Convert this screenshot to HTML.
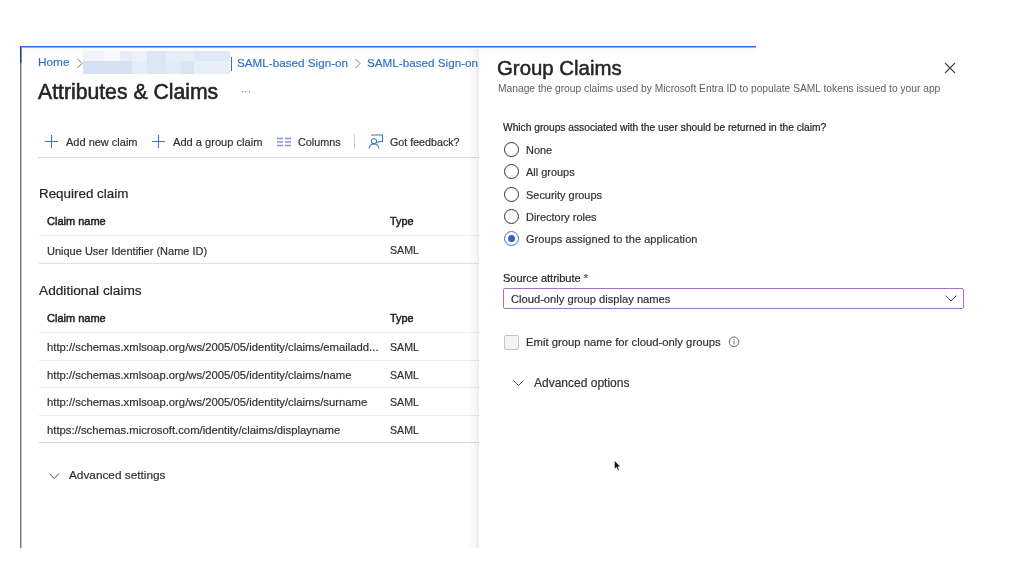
<!DOCTYPE html>
<html><head><meta charset="utf-8">
<style>
html,body{margin:0;padding:0;background:#fff;width:1023px;height:568px;overflow:hidden;position:relative;font-family:"Liberation Sans",sans-serif;}
.a{position:absolute;white-space:nowrap;line-height:1;will-change:transform;}
.ln{position:absolute;}
.link{color:#2f6fc8;-webkit-text-stroke:0.15px #2f6fc8;}
.dk{color:#242424;-webkit-text-stroke:0.2px #242424;}
.tx{color:#323130;-webkit-text-stroke:0.2px #323130;}
</style></head><body>

<!-- frame -->
<div class="ln" style="left:20px;top:46px;width:736px;height:1px;background:#2e6fd8;"></div><div class="ln" style="left:20px;top:47px;width:736px;height:1px;background:#8fb3ec;"></div>
<div class="ln" style="left:20px;top:46px;width:1px;height:17px;background:#1e3b70;"></div><div class="ln" style="left:21px;top:46px;width:1px;height:17px;background:#8090b0;"></div>
<div class="ln" style="left:20px;top:63px;width:1px;height:485px;background:#7a7a7a;"></div><div class="ln" style="left:21px;top:63px;width:1px;height:485px;background:#c4c4c4;"></div>

<div class="ln" style="left:22px;top:48px;width:734px;height:10px;background:linear-gradient(to bottom,rgba(0,0,0,0.018),rgba(0,0,0,0))"></div>
<!-- breadcrumb -->
<div class="a link" style="left:38px;top:57px;font-size:11.8px;">Home</div>
<svg class="ln" style="left:76px;top:58px" width="8" height="11" viewBox="0 0 8 11"><path d="M1.5 1 L6 5.5 L1.5 10" fill="none" stroke="#777" stroke-width="1"/></svg>
<!-- blurred block -->
<div class="ln" style="left:83px;top:51px;width:147px;height:23px;overflow:hidden">
  <div class="ln" style="left:0;top:0;width:20px;height:10px;background:#f1f5fb"></div>
  <div class="ln" style="left:20px;top:0;width:17px;height:10px;background:#f6f8fd"></div>
  <div class="ln" style="left:37px;top:0;width:12px;height:10px;background:#e6edf8"></div>
  <div class="ln" style="left:49px;top:0;width:15px;height:10px;background:#edf2fa"></div>
  <div class="ln" style="left:64px;top:0;width:19px;height:10px;background:#dde7f3"></div>
  <div class="ln" style="left:83px;top:0;width:28px;height:10px;background:#e8eef8"></div>
  <div class="ln" style="left:111px;top:0;width:36px;height:10px;background:#e0e8f4"></div>
  <div class="ln" style="left:0;top:10px;width:49px;height:13px;background:#d4e1f3"></div>
  <div class="ln" style="left:49px;top:10px;width:15px;height:13px;background:#e6edf9"></div>
  <div class="ln" style="left:64px;top:10px;width:19px;height:13px;background:#dde6f3"></div>
  <div class="ln" style="left:83px;top:10px;width:15px;height:13px;background:#e2eaf5"></div>
  <div class="ln" style="left:98px;top:10px;width:13px;height:13px;background:#dbe5f2"></div>
  <div class="ln" style="left:111px;top:10px;width:36px;height:13px;background:#e9eff8"></div>
</div>
<div class="ln" style="left:231px;top:57px;width:1px;height:14px;background:#2f6fc8"></div>
<div class="a link" style="left:237px;top:57px;font-size:11.7px;">SAML-based Sign-on</div>
<svg class="ln" style="left:354px;top:58px" width="8" height="11" viewBox="0 0 8 11"><path d="M1.5 1 L6 5.5 L1.5 10" fill="none" stroke="#777" stroke-width="1"/></svg>
<div class="a link" style="left:367px;top:57px;font-size:11.7px;">SAML-based Sign-on</div>

<!-- title -->
<div class="a dk" style="left:38px;top:81px;font-size:21.2px;-webkit-text-stroke:0.55px #242424">Attributes &amp; Claims</div>
<div class="a" style="left:241px;top:86.5px;font-size:10px;color:#666;letter-spacing:0px">&middot;&middot;&middot;</div>

<!-- toolbar -->
<svg class="ln" style="left:45px;top:135px" width="13" height="13" viewBox="0 0 13 13"><path d="M6.5 0 V13 M0 6.5 H13" stroke="#3b78d4" stroke-width="1.1" fill="none"/></svg>
<div class="a tx" style="left:66px;top:137px;font-size:11px;">Add new claim</div>
<svg class="ln" style="left:152px;top:135px" width="13" height="13" viewBox="0 0 13 13"><path d="M6.5 0 V13 M0 6.5 H13" stroke="#3b78d4" stroke-width="1.1" fill="none"/></svg>
<div class="a tx" style="left:172.5px;top:137px;font-size:11.1px;">Add a group claim</div>
<svg class="ln" style="left:276.5px;top:136.5px" width="15" height="11" viewBox="0 0 15 11"><path d="M0 1.5 H6 M0 5 H6 M0 8.5 H6 M8 1.5 H14 M8 5 H14 M8 8.5 H14" stroke="#7d96da" stroke-width="1.3" fill="none"/></svg>
<div class="a tx" style="left:298px;top:137px;font-size:10.8px;">Columns</div>
<div class="ln" style="left:354px;top:134px;width:1px;height:15px;background:#d0d0d0"></div>
<svg class="ln" style="left:368px;top:134px" width="16" height="15" viewBox="0 0 16 15"><path d="M4 2 V1 H14.5 V7.5 H11 L9.5 9" stroke="#3b78d4" stroke-width="1.1" fill="none"/><circle cx="6" cy="7.3" r="2.6" stroke="#3b78d4" stroke-width="1.1" fill="none"/><path d="M1 14.5 C1.5 11.5 3.5 10 6 10 C8.5 10 10.5 11.5 11 14.5" stroke="#3b78d4" stroke-width="1.1" fill="none"/></svg>
<div class="a tx" style="left:390px;top:137px;font-size:10.7px;">Got feedback?</div>
<div class="ln" style="left:38px;top:157px;width:441px;height:1px;background:#dcdcdc"></div>

<!-- required claim -->
<div class="a dk" style="left:38.5px;top:187px;font-size:13.4px;">Required claim</div>
<div class="a dk" style="left:47px;top:216px;font-size:11px;-webkit-text-stroke:0.5px #242424">Claim name</div>
<div class="a dk" style="left:390px;top:216px;font-size:10.8px;-webkit-text-stroke:0.5px #242424">Type</div>
<div class="ln" style="left:39px;top:235px;width:440px;height:1px;background:#f0f0f0"></div>
<div class="a tx" style="left:47px;top:246px;font-size:11px;">Unique User Identifier (Name ID)</div>
<div class="a tx" style="left:389.5px;top:245px;font-size:10.6px;">SAML</div>
<div class="ln" style="left:39px;top:263px;width:440px;height:1px;background:#e1e1e1"></div>

<!-- additional claims -->
<div class="a dk" style="left:38.5px;top:284px;font-size:13.7px;">Additional claims</div>
<div class="a dk" style="left:47px;top:313px;font-size:11px;-webkit-text-stroke:0.5px #242424">Claim name</div>
<div class="a dk" style="left:390px;top:313px;font-size:10.8px;-webkit-text-stroke:0.5px #242424">Type</div>
<div class="ln" style="left:39px;top:332px;width:440px;height:1px;background:#f0f0f0"></div>
<div class="a tx" style="left:47px;top:342px;font-size:11.3px;">http://schemas.xmlsoap.org/ws/2005/05/identity/claims/emailadd...</div>
<div class="a tx" style="left:389.5px;top:342px;font-size:10.6px;">SAML</div>
<div class="ln" style="left:39px;top:360px;width:440px;height:1px;background:#ecebea"></div>
<div class="a tx" style="left:47px;top:369.5px;font-size:11.3px;">http://schemas.xmlsoap.org/ws/2005/05/identity/claims/name</div>
<div class="a tx" style="left:389.5px;top:369.5px;font-size:10.6px;">SAML</div>
<div class="ln" style="left:39px;top:387px;width:440px;height:1px;background:#ecebea"></div>
<div class="a tx" style="left:47px;top:397px;font-size:11.3px;">http://schemas.xmlsoap.org/ws/2005/05/identity/claims/surname</div>
<div class="a tx" style="left:389.5px;top:397px;font-size:10.6px;">SAML</div>
<div class="ln" style="left:39px;top:415px;width:440px;height:1px;background:#ecebea"></div>
<div class="a tx" style="left:47px;top:424.5px;font-size:11.3px;">https://schemas.microsoft.com/identity/claims/displayname</div>
<div class="a tx" style="left:389.5px;top:424.5px;font-size:10.6px;">SAML</div>
<div class="ln" style="left:39px;top:442px;width:440px;height:1px;background:#d9d9d9"></div>

<!-- advanced settings -->
<svg class="ln" style="left:48.5px;top:472.5px" width="11" height="7" viewBox="0 0 11 7"><path d="M0.5 0.5 L5.25 5.5 L10 0.5" stroke="#444" stroke-width="1" fill="none"/></svg>
<div class="a tx" style="left:69px;top:470px;font-size:11.8px;">Advanced settings</div>

<!-- panel -->
<div class="ln" style="left:467px;top:49px;width:12px;height:499px;background:linear-gradient(to right,rgba(0,0,0,0),rgba(0,0,0,0.018) 50%,rgba(0,0,0,0.065))"></div>

<div class="a dk" style="left:497px;top:58px;font-size:20.4px;-webkit-text-stroke:0.5px #242424">Group Claims</div>
<svg class="ln" style="left:944px;top:62px" width="12" height="12" viewBox="0 0 12 12"><path d="M1 1 L11 11 M11 1 L1 11" stroke="#444" stroke-width="1.1" fill="none"/></svg>
<div class="a" style="left:497.5px;top:84px;font-size:10.26px;color:#605e5c">Manage the group claims used by Microsoft Entra ID to populate SAML tokens issued to your app</div>

<div class="a dk" style="left:503px;top:123px;font-size:10.23px;">Which groups associated with the user should be returned in the claim?</div>

<div class="ln" style="left:503.5px;top:141.5px;width:13px;height:13px;border:1.1px solid #333;border-radius:50%"></div>
<div class="a tx" style="left:526px;top:144.5px;font-size:10.95px;">None</div>
<div class="ln" style="left:503.5px;top:164px;width:13px;height:13px;border:1.1px solid #333;border-radius:50%"></div>
<div class="a tx" style="left:526px;top:167px;font-size:10.95px;">All groups</div>
<div class="ln" style="left:503.5px;top:186.5px;width:13px;height:13px;border:1.1px solid #333;border-radius:50%"></div>
<div class="a tx" style="left:526px;top:189.5px;font-size:10.95px;">Security groups</div>
<div class="ln" style="left:503.5px;top:208.5px;width:13px;height:13px;border:1.1px solid #333;border-radius:50%"></div>
<div class="a tx" style="left:526px;top:211.5px;font-size:10.95px;">Directory roles</div>
<div class="ln" style="left:503.5px;top:230.5px;width:13px;height:13px;border:1px solid #4470c4;border-radius:50%"></div>
<div class="ln" style="left:507.5px;top:234.5px;width:7px;height:7px;background:#2c66c6;border-radius:50%"></div>
<div class="a tx" style="left:526px;top:233.5px;font-size:10.95px;letter-spacing:0.09px">Groups assigned to the application</div>

<div class="a dk" style="left:503px;top:273px;font-size:11px;">Source attribute <span style="color:#a4262c;-webkit-text-stroke:0.2px #a4262c">*</span></div>
<div class="ln" style="left:502.5px;top:288px;width:459.5px;height:19px;border:1px solid #a272c4;border-radius:2px"></div>
<div class="a tx" style="left:510.5px;top:294px;font-size:11.16px;">Cloud-only group display names</div>
<svg class="ln" style="left:945px;top:295px" width="12" height="7" viewBox="0 0 12 7"><path d="M0.5 0.5 L6 6 L11.5 0.5" stroke="#444" stroke-width="1" fill="none"/></svg>

<div class="ln" style="left:503.5px;top:335px;width:13px;height:13px;border:1px solid #c6c6c6;background:#f3f3f3;border-radius:2px"></div>
<div class="a tx" style="left:526px;top:336.5px;font-size:11.3px;">Emit group name for cloud-only groups</div>
<svg class="ln" style="left:728px;top:336px" width="12" height="12" viewBox="0 0 12 12"><circle cx="6" cy="5.8" r="4.8" stroke="#5a5a5a" stroke-width="0.9" fill="none"/><path d="M6 4.9 V8.4" stroke="#5a5a5a" stroke-width="0.9"/><circle cx="6" cy="3.4" r="0.55" fill="#5a5a5a"/></svg>

<svg class="ln" style="left:512.5px;top:380px" width="11" height="7" viewBox="0 0 11 7"><path d="M0.5 0.5 L5.5 5.5 L10.5 0.5" stroke="#555" stroke-width="1" fill="none"/></svg>
<div class="a tx" style="left:534px;top:377px;font-size:12px;">Advanced options</div>

<!-- cursor -->
<svg class="ln" style="left:614px;top:460px" width="8" height="12" viewBox="0 0 8 12"><path d="M0.5 0.5 L0.5 9 L2.5 7.3 L4 10.5 L5.3 9.9 L3.8 6.8 L6.5 6.8 Z" fill="#111" stroke="#fff" stroke-width="0.5"/></svg>

</body></html>
